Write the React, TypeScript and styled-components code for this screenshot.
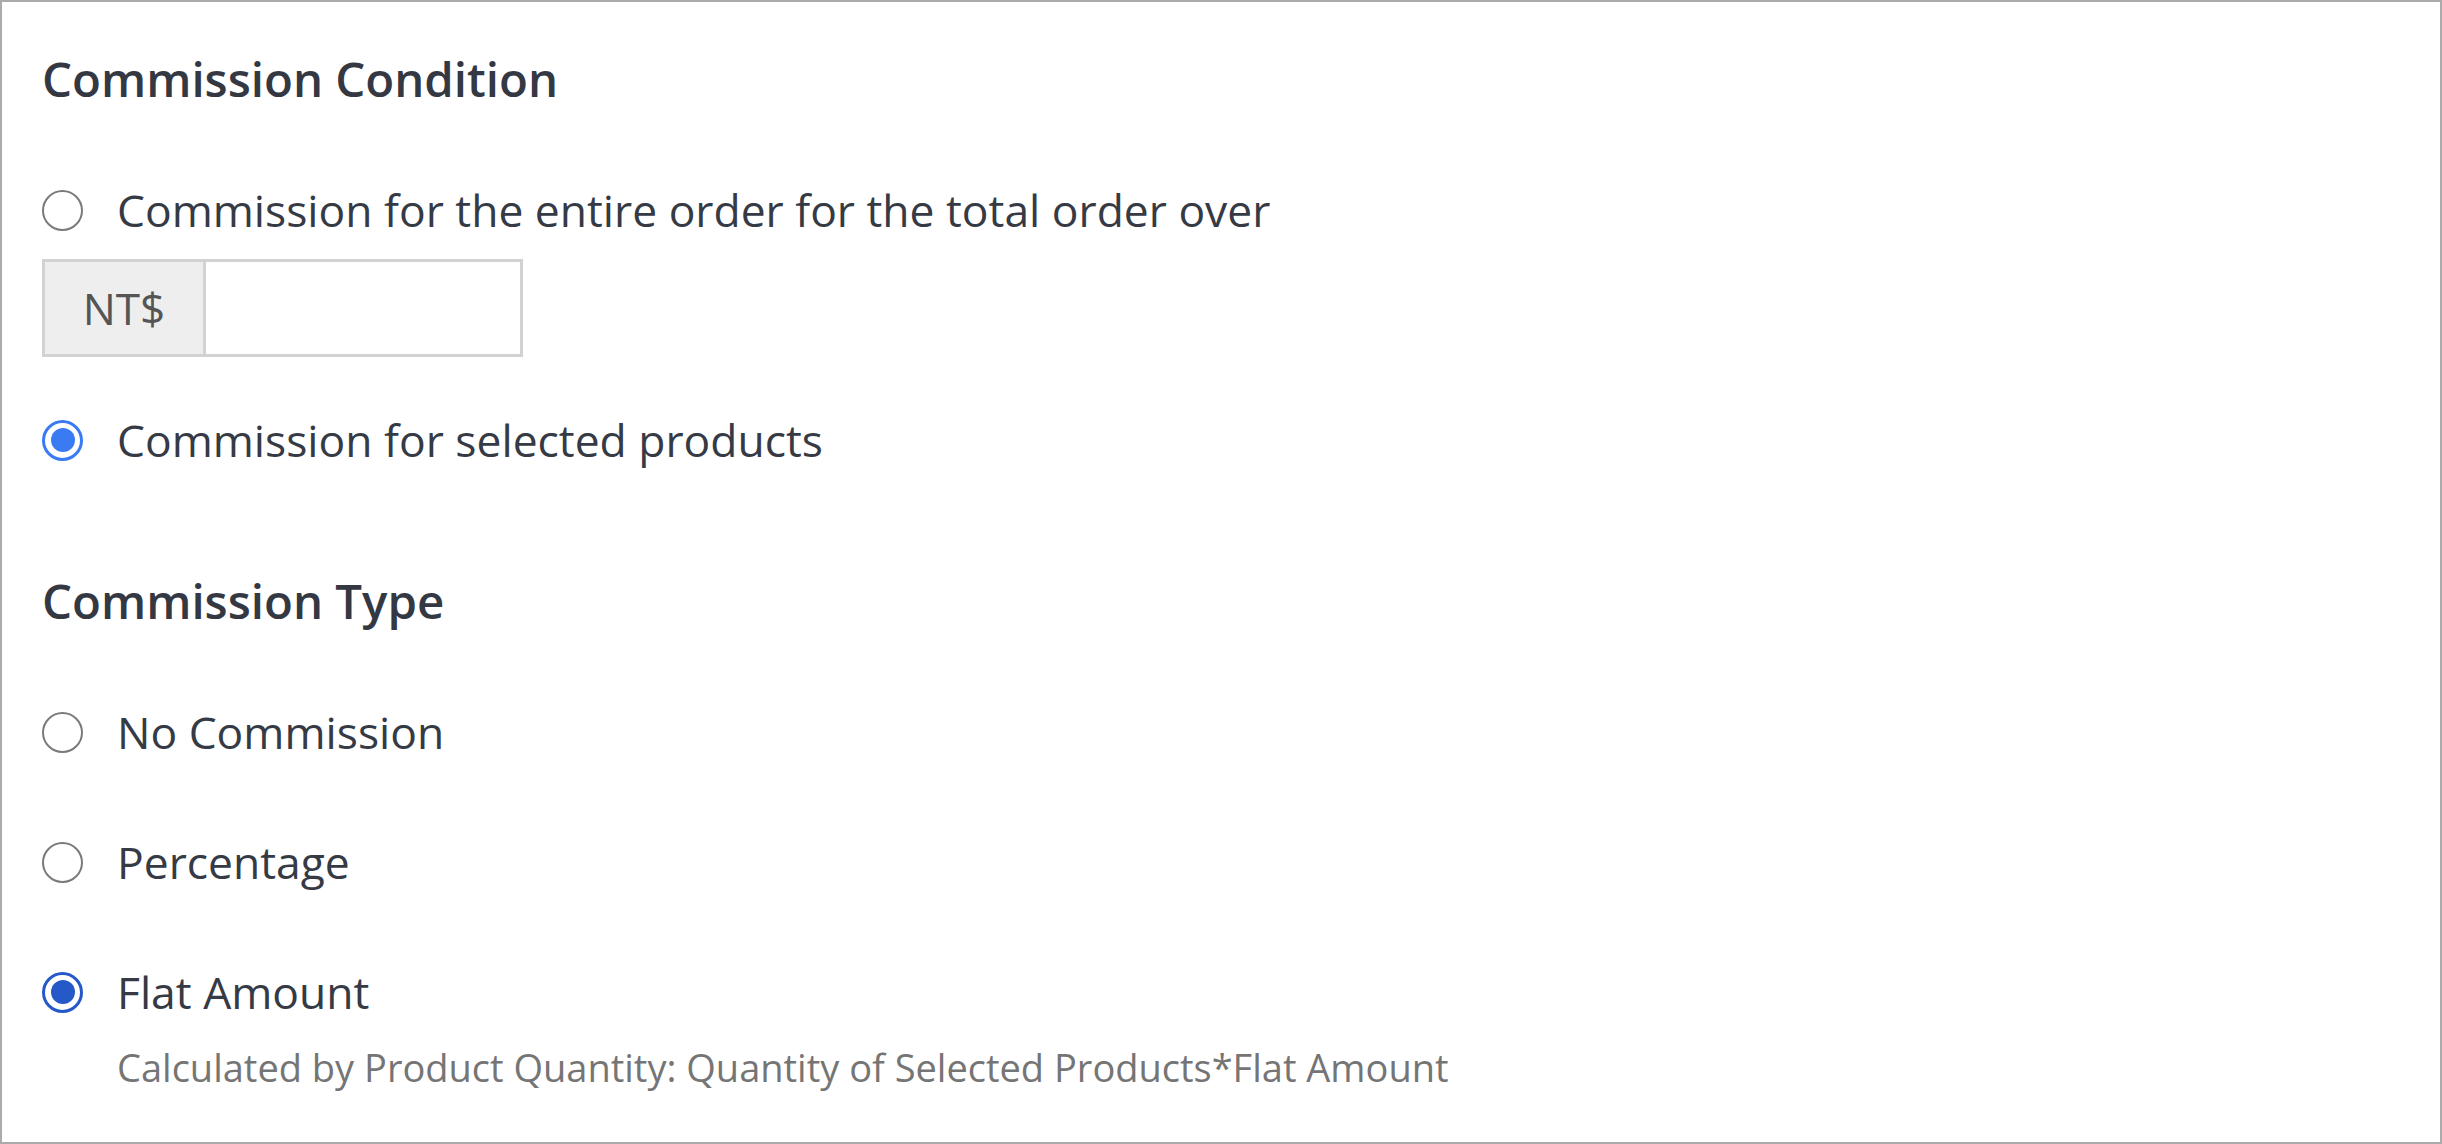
import React from 'react';
import styled, {createGlobalStyle} from 'styled-components';

const GlobalStyle = createGlobalStyle`
	html, body {
		margin: 0;
		padding: 0;
		background: #fff;
	}

	body {
		font-family: 'Open Sans', 'Noto Sans', 'Liberation Sans', sans-serif;
		color: #363a45;
	}
`;

const Panel = styled.div`
	box-sizing: border-box;
	width: 2442px;
	height: 1144px;
	border: 2px solid #ababab;
	padding: 47px 40px 0;
	display: flex;
	flex-direction: column;
	align-items: flex-start;
`;

const SectionTitle = styled.h3<{$gap: number}>`
	margin: ${props => props.$gap}px 0 0;
	height: 60px;
	display: flex;
	align-items: center;
	font-size: 47.4px;
	font-weight: 600;
	line-height: 60px;
	color: #343843;
`;

const Option = styled.label<{$gap: number}>`
	margin-top: ${props => props.$gap}px;
	height: 60px;
	display: flex;
	align-items: center;
	gap: 34px;
	font-size: 44.4px;
	line-height: 60px;
	color: #353a45;
	cursor: pointer;
`;

const Mark = styled.span<{$checked?: boolean; $tone?: string}>`
	box-sizing: border-box;
	flex: none;
	width: 41px;
	height: 41px;
	border-radius: 50%;
	border: ${props => (props.$checked ? `3.5px solid ${props.$tone}` : '2.5px solid #7a7a7a')};
	background: #fff;
	display: flex;
	align-items: center;
	justify-content: center;

	&::after {
		content: '';
		display: ${props => (props.$checked ? 'block' : 'none')};
		width: 24px;
		height: 24px;
		border-radius: 50%;
		background: ${props => props.$tone};
	}
`;

const AmountGroup = styled.div`
	margin-top: 19px;
	display: flex;
	height: 98px;
	box-sizing: border-box;
`;

const Prefix = styled.span`
	box-sizing: border-box;
	width: 164px;
	display: flex;
	align-items: center;
	justify-content: center;
	background: #eeeeee;
	border: 3px solid #d2d2d2;
	font-size: 44px;
	color: #555;
`;

const AmountInput = styled.input`
	box-sizing: border-box;
	width: 317px;
	height: 98px;
	border: 3px solid #d2d2d2;
	border-left: none;
	outline: none;
	padding: 0 20px;
	font-family: inherit;
	font-size: 44px;
	color: #333;
	background: #fff;
`;

const Hint = styled.p`
	margin: 22px 0 0 75px;
	font-size: 38px;
	line-height: 46px;
	color: #757575;
`;

type RadioProps = {
	label: string;
	checked?: boolean;
	tone?: string;
	gap: number;
};

const Radio = ({label, checked, tone = '#3a7bf3', gap}: RadioProps): JSX.Element => (
	<Option $gap={gap}>
		<Mark $checked={checked} $tone={tone}/>
		<span>{label}</span>
	</Option>
);

const App = (): JSX.Element => (
	<>
		<GlobalStyle/>
		<Panel>
			<SectionTitle $gap={0}>Commission Condition</SectionTitle>
			<Radio gap={71} label="Commission for the entire order for the total order over"/>
			<AmountGroup>
				<Prefix>NT$</Prefix>
				<AmountInput type="text" aria-label="Order total"/>
			</AmountGroup>
			<Radio checked gap={53} label="Commission for selected products"/>

			<SectionTitle $gap={101}>Commission Type</SectionTitle>
			<Radio gap={71} label="No Commission"/>
			<Radio gap={70} label="Percentage"/>
			<Radio checked tone="#2559c7" gap={70} label="Flat Amount"/>
			<Hint>Calculated by Product Quantity: Quantity of Selected Products*Flat Amount</Hint>
		</Panel>
	</>
);

export default App;
